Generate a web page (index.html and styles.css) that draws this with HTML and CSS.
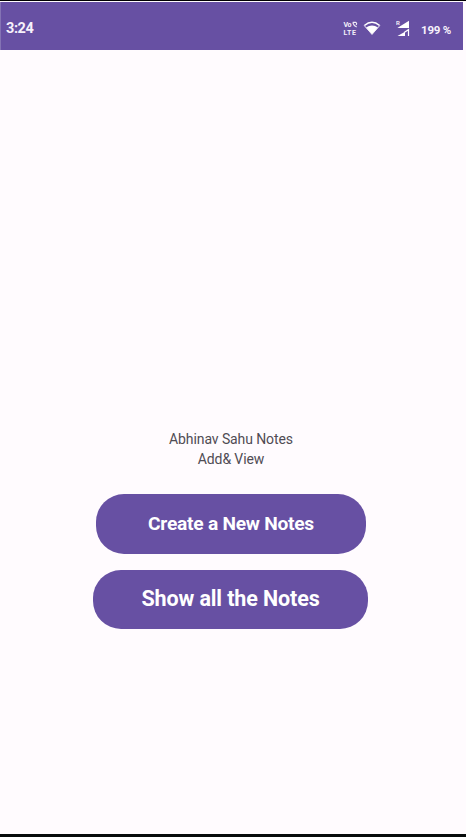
FILE: index.html
```
<!DOCTYPE html>
<html lang="en">
<head>
<meta charset="utf-8">
<title>Notes</title>
<link rel="stylesheet" href="styles.css">
</head>
<body>
<div class="screen">
  <header class="status">
    <span class="clock">3:24</span>
    <svg class="volte" width="15" height="15" viewBox="0 0 15 15">
      <text x="0.5" y="6" textLength="8">Vo</text>
      <text x="0.5" y="14" textLength="12.5">LTE</text>
      <path d="M9.7 1.5c.6 2.2 1.8 3.5 4 4.4M9.7 1.4h3.2c1 .8 1 1.6.2 2.6"/>
    </svg>
    <svg class="wifi" width="18" height="14" viewBox="0 0 18 14">
      <path class="fan" d="M9 13.6 3 6.6Q9 2.2 15 6.6Z"/>
      <path class="arc" d="M1.4 4.5Q9-2 16.6 4.5"/>
      <path class="edge" d="M1.2 4.5 9 13.4l7.8-8.9"/>
    </svg>
    <svg class="signal" width="14" height="17" viewBox="0 0 14 17">
      <text x="0" y="5">R</text>
      <path class="solid" d="M13 .8V8H1.3Z"/>
      <path class="solid" d="M1.5 16 9 11.8V16Z"/>
      <path class="line" d="M8.5 12.2 12.5 9.7V16"/>
    </svg>
    <span class="battery">199 %</span>
  </header>
  <main class="home">
    <p class="intro">Abhinav Sahu Notes<br>Add&amp; View</p>
    <button class="btn create">Create a New Notes</button>
    <button class="btn show">Show all the Notes</button>
  </main>
</div>
</body>
</html>
```
FILE: styles.css
```
* { box-sizing: border-box; }
body { margin: 0; background: #fffbfe; font-family: Roboto, "Liberation Sans", sans-serif; }
.screen {
  height: 837px;
  border-top: 1px solid #000;
  border-bottom: 3px solid #070b0b;
  display: flex;
  flex-direction: column;
  overflow: hidden;
}
.status {
  width: 463px;
  height: 48px;
  margin-top: 1px;
  flex: none;
  padding: 4px 11px 0 5px;
  display: flex;
  align-items: center;
  background: #6750a3;
  border-left: 1px solid #8473b4;
  color: #f7f2fb;
  font-weight: 700;
}
.clock { width: 337px; font-size: 14.5px; letter-spacing: -0.4px; }
.volte { margin-top: 1px; fill: #f5f0fa; font-size: 7px; }
.volte path { fill: none; stroke: #eee8f5; stroke-width: 1.1; }
.wifi { margin-left: 5px; }
.fan { fill: #fff; }
.arc { fill: none; stroke: #fff; stroke-width: 1.6; }
.edge { fill: none; stroke: #eee8f5; stroke-width: 1; }
.signal { margin-left: 15px; fill: #eee8f5; font-size: 6px; }
.signal .solid { fill: #fff; }
.signal .line { fill: none; stroke: #fff; stroke-width: 1.2; }
.battery { margin: 3px 0 0 11px; font-size: 11.5px; letter-spacing: -0.2px; white-space: nowrap; }
.home {
  width: 462px;
  padding-top: 379px;
  display: flex;
  flex-direction: column;
  align-items: center;
}
.intro { margin: 0 0 25px; font-size: 14px; line-height: 20px; letter-spacing: -0.1px; text-align: center; color: #504c54; }
.btn {
  border: 0;
  padding: 0;
  font-family: inherit;
  font-weight: 700;
  color: #fff;
  background: #6750a3;
  border-radius: 28px;
}
.create { width: 270px; height: 60px; padding-bottom: 1px; font-size: 19.2px; letter-spacing: -0.26px; }
.show { width: 275px; height: 59px; margin: 16px 1px 0 0; padding-bottom: 2px; font-size: 21.5px; letter-spacing: -0.12px; }
```
